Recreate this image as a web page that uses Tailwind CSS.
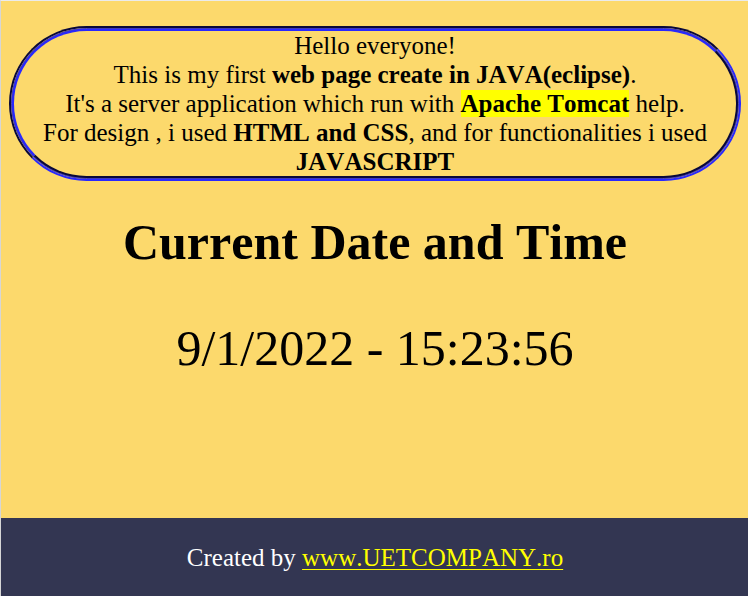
<!DOCTYPE html>
<html lang="en">
<head>
<meta charset="utf-8">
<title>Current Date and Time</title>
<script src="https://cdn.jsdelivr.net/npm/@tailwindcss/browser@4"></script>
</head>
<body class="flex min-h-screen flex-col border-t border-l border-t-[#ebebeb] border-l-[#d6d6d6] bg-[#fcd96c] font-['Liberation_Serif','Times_New_Roman',serif] text-black [font-kerning:none]">
<main class="flex-1 pt-[25px] pr-[7px] pl-2 text-center">
<!-- Grooved frame: dark outer edge, blended middle, bright inner edge -->
<div class="rounded-[80px] border-2 border-t-[#08083a] border-r-[#2828ff] border-b-[#2828ff] border-l-[#08083a]">
<div class="rounded-[78px] border border-[#3f39b8] bg-[#3f39b8]">
<p class="rounded-[77px] border-2 border-t-[#2828ff] border-r-[#08083a] border-b-[#08083a] border-l-[#2828ff] bg-[#fcd96c] px-6 text-[25px] leading-[29px]">Hello everyone!<br>This is my first <b>web page create in JAVA(eclipse)</b>.<br>It's a server application which run with <mark class="bg-[#ffff00] font-bold">Apache Tomcat</mark> help.<br>For design , i used <b>HTML and CSS</b>, and for functionalities i used <b>JAVASCRIPT</b></p>
</div>
</div>
<h1 class="mt-8 text-[50px] leading-[58px] font-bold">Current Date and Time</h1>
<p class="mt-12 text-[50px] leading-[58px]">9/1/2022 - 15:23:56</p>
</main>
<footer class="bg-[#333652] pt-[25px] pr-[7px] pb-6 pl-2 text-center text-[25px] leading-[29px] text-white">
<p>Created by <a href="#" class="text-[#ffff00] underline decoration-1 underline-offset-[3px]">www.UETCOMPANY.ro</a></p>
</footer>
</body>
</html>
